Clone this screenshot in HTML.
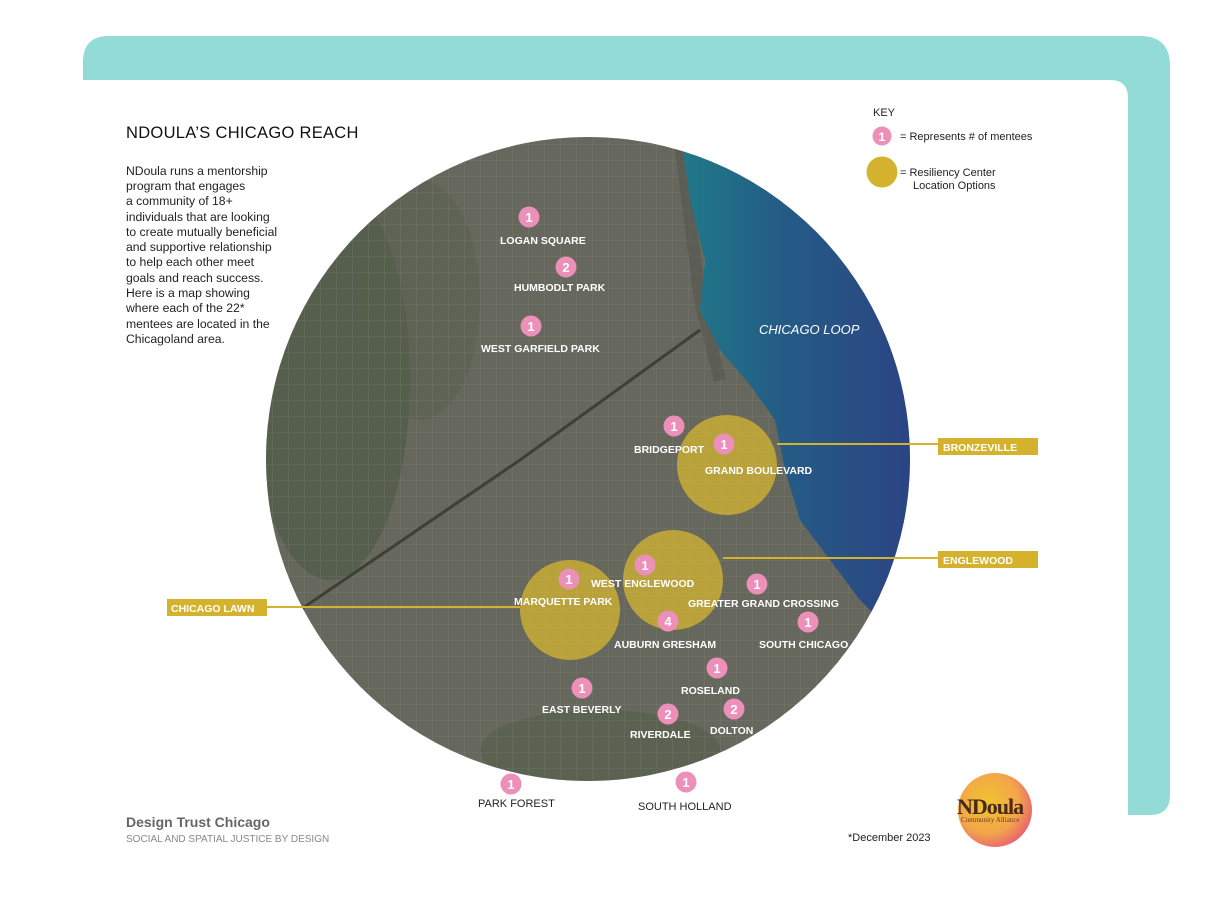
<!DOCTYPE html>
<html><head><meta charset="utf-8"><style>
html,body{margin:0;padding:0;background:#fff;}
body{width:1210px;height:907px;overflow:hidden;position:relative;font-family:"Liberation Sans",sans-serif;}
</style></head><body>
<svg width="1210" height="907" viewBox="0 0 1210 907" xmlns="http://www.w3.org/2000/svg" style="position:absolute;left:0;top:0" font-family="Liberation Sans, sans-serif">
<defs>
<clipPath id="c"><circle cx="588" cy="459" r="322"/></clipPath>
<pattern id="grid" width="16" height="16" patternUnits="userSpaceOnUse">
<path d="M0 0H16M0 0V16" stroke="#bdbcae" stroke-width="1" opacity="0.18"/>
</pattern>
<linearGradient id="w" x1="0" y1="0" x2="1" y2="0">
<stop offset="0" stop-color="#1f7a88"/><stop offset="0.4" stop-color="#245d86"/><stop offset="1" stop-color="#2c4283"/>
</linearGradient>
<radialGradient id="logo" cx="0.4" cy="0.4" r="0.7">
<stop offset="0" stop-color="#f0c430"/><stop offset="0.6" stop-color="#f2a54a"/><stop offset="1" stop-color="#e8507a"/>
</radialGradient>
</defs>
<path d="M83 80 V62 Q83 36 109 36 H1140 Q1170 36 1170 66 V795 Q1170 815 1150 815 H1128 V98 Q1128 80 1110 80 Z" fill="#93dbd7"/>
<g clip-path="url(#c)">
<rect x="260" y="130" width="660" height="660" fill="#66675d"/>
<ellipse cx="330" cy="380" rx="80" ry="200" fill="#4b5a43" opacity="0.6"/>
<ellipse cx="600" cy="750" rx="120" ry="40" fill="#4f5e48" opacity="0.5"/>
<ellipse cx="420" cy="300" rx="60" ry="120" fill="#55604c" opacity="0.4"/>
<rect x="260" y="130" width="660" height="660" fill="url(#grid)"/>
<path d="M300 610 L520 460 L700 330" stroke="#34372f" stroke-width="3" fill="none" opacity="0.8"/>
<path d="M680 140 L700 300 L720 380" stroke="#55564f" stroke-width="12" fill="none" opacity="0.6"/>
<path d="M680 130 L690 200 L705 260 L700 310 L720 350 L750 385 L775 420 L785 470 L800 520 L830 560 L860 600 L880 620 L920 600 L920 130 Z" fill="url(#w)"/>
<circle cx="727" cy="465" r="50" fill="#d9b82f" opacity="0.72"/>
<circle cx="673" cy="580" r="50" fill="#d9b82f" opacity="0.72"/>
<circle cx="570" cy="610" r="50" fill="#d9b82f" opacity="0.72"/>
</g>
<g fill="#d4b22e">
<rect x="777" y="443" width="161" height="2"/><rect x="938" y="438" width="100" height="17"/>
<rect x="723" y="557" width="215" height="2"/><rect x="938" y="551" width="100" height="17"/>
<rect x="267" y="606" width="253" height="2"/><rect x="167" y="599" width="100" height="17"/>
</g>
<g fill="#fff" font-size="10.5" font-weight="bold">
<text x="943" y="451">BRONZEVILLE</text>
<text x="943" y="564">ENGLEWOOD</text>
<text x="171" y="612">CHICAGO LAWN</text>
</g>
<text x="759" y="334" fill="#fff" font-size="13" font-style="italic">CHICAGO LOOP</text>
<g fill="#ec8fb9">
<circle cx="529" cy="217" r="10.5"/><circle cx="566" cy="267" r="10.5"/><circle cx="531" cy="326" r="10.5"/>
<circle cx="674" cy="426" r="10.5"/><circle cx="724" cy="444" r="10.5"/><circle cx="645" cy="565" r="10.5"/>
<circle cx="569" cy="579" r="10.5"/><circle cx="757" cy="584" r="10.5"/><circle cx="668" cy="621" r="10.5"/>
<circle cx="808" cy="622" r="10.5"/><circle cx="717" cy="668" r="10.5"/><circle cx="582" cy="688" r="10.5"/>
<circle cx="668" cy="714" r="10.5"/><circle cx="734" cy="709" r="10.5"/><circle cx="511" cy="784" r="10.5"/>
<circle cx="686" cy="782" r="10.5"/><circle cx="882" cy="136" r="9.5"/>
</g>
<circle cx="882" cy="172" r="15.5" fill="#d6b32f"/>
<g fill="#fff" font-size="13" font-weight="bold" text-anchor="middle">
<text x="529" y="222">1</text><text x="566" y="272">2</text><text x="531" y="331">1</text>
<text x="674" y="431">1</text><text x="724" y="449">1</text><text x="645" y="570">1</text>
<text x="569" y="584">1</text><text x="757" y="589">1</text><text x="668" y="626">4</text>
<text x="808" y="627">1</text><text x="717" y="673">1</text><text x="582" y="693">1</text>
<text x="668" y="719">2</text><text x="734" y="714">2</text><text x="511" y="789">1</text>
<text x="686" y="787">1</text><text x="882" y="141" font-size="12">1</text>
</g>
<g fill="#fff" font-size="10.5" font-weight="bold">
<text x="500" y="244">LOGAN SQUARE</text>
<text x="514" y="291">HUMBODLT PARK</text>
<text x="481" y="352">WEST GARFIELD PARK</text>
<text x="634" y="453">BRIDGEPORT</text>
<text x="705" y="474">GRAND BOULEVARD</text>
<text x="591" y="587">WEST ENGLEWOOD</text>
<text x="514" y="605">MARQUETTE PARK</text>
<text x="688" y="607">GREATER GRAND CROSSING</text>
<text x="614" y="648">AUBURN GRESHAM</text>
<text x="759" y="648">SOUTH CHICAGO</text>
<text x="681" y="694">ROSELAND</text>
<text x="542" y="713">EAST BEVERLY</text>
<text x="630" y="738">RIVERDALE</text>
<text x="710" y="734">DOLTON</text>
</g>
<g fill="#222" font-size="11">
<text x="478" y="807">PARK FOREST</text>
<text x="638" y="810">SOUTH HOLLAND</text>
</g>
<text x="126" y="138" fill="#111" font-size="16.5" letter-spacing="0.3">NDOULA’S CHICAGO REACH</text>
<g fill="#222" font-size="12.2">
<text x="126" y="175">NDoula runs a mentorship</text>
<text x="126" y="190">program that engages</text>
<text x="126" y="205">a community of 18+</text>
<text x="126" y="221">individuals that are looking</text>
<text x="126" y="236">to create mutually beneficial</text>
<text x="126" y="251">and supportive relationship</text>
<text x="126" y="266">to help each other meet</text>
<text x="126" y="282">goals and reach success.</text>
<text x="126" y="297">Here is a map showing</text>
<text x="126" y="312">where each of the 22*</text>
<text x="126" y="328">mentees are located  in the</text>
<text x="126" y="343">Chicagoland area.</text>
</g>
<g fill="#222" font-size="11">
<text x="873" y="116">KEY</text>
<text x="900" y="140">= Represents # of mentees</text>
<text x="900" y="176">= Resiliency Center</text>
<text x="913" y="189">Location Options</text>
<text x="848" y="841">*December 2023</text>
</g>
<text x="126" y="827" fill="#666" font-size="14" font-weight="bold">Design Trust Chicago</text>
<text x="126" y="842" fill="#888" font-size="10">SOCIAL AND SPATIAL JUSTICE BY DESIGN</text>
<circle cx="995" cy="810" r="37" fill="url(#logo)"/>
<text x="957" y="814" fill="#4a2a15" font-size="22" font-family="Liberation Serif, serif" font-weight="bold" letter-spacing="-1">NDoula</text>
<text x="961" y="822" fill="#6a3a25" font-size="7" font-family="Liberation Serif, serif">Community Alliance</text>
</svg>
</body></html>
